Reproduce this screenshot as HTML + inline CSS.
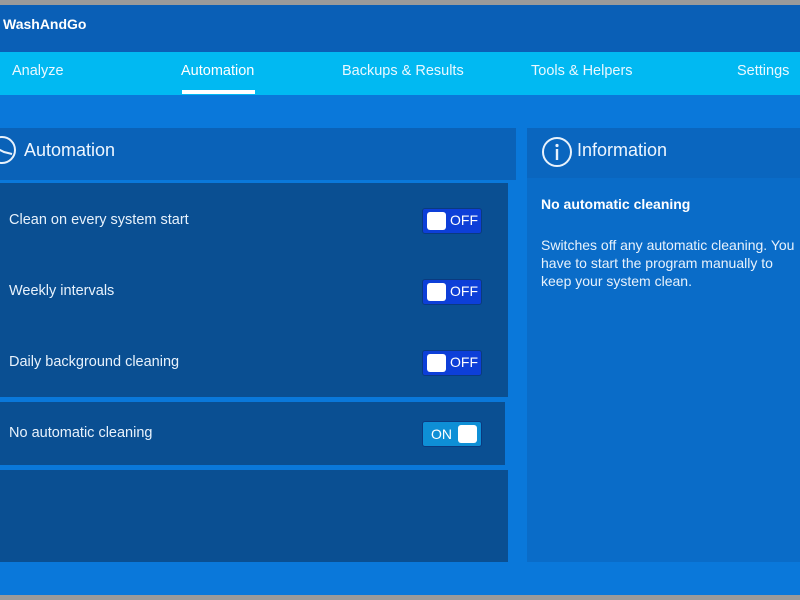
<!DOCTYPE html>
<html><head><style>
*{margin:0;padding:0;box-sizing:border-box}
body{width:800px;height:600px;overflow:hidden;background:#0a78da;font-family:"Liberation Sans","DejaVu Sans",sans-serif;color:#e8f2fc;position:relative}
.abs{position:absolute}
.tog{position:absolute;left:422px;width:60px;height:26px;border-radius:3px;border:1px solid #0a3a80;font-size:14px;color:#fff}
.off{background:#0d3fd8}
.off .k{position:absolute;left:4px;top:3px;width:19px;height:18px;background:#fff;border-radius:3px}
.off span{position:absolute;left:27px;top:3px}
.on{background:#0e8fd6}
.on .k{position:absolute;right:4px;top:3px;width:19px;height:18px;background:#fff;border-radius:3px}
.on span{position:absolute;left:8px;top:4px}
.lbl{position:absolute;left:9px;font-size:14.5px}
</style></head><body>
<div class="abs" style="left:0;top:0;width:800px;height:5px;background:#9a9a9a"></div>
<div class="abs" style="left:0;top:5px;width:800px;height:47px;background:#0a5fb6"></div>
<div class="abs" style="left:3px;top:16px;font-size:14px;font-weight:bold;color:#fff">WashAndGo</div>
<div class="abs" style="left:0;top:52px;width:800px;height:43px;background:#01b9f2"></div>
<div class="abs" style="top:63px;left:12px;font-size:14.5px;color:#eaf8ff">Analyze</div>
<div class="abs" style="top:63px;left:181px;font-size:14.5px;color:#fff">Automation</div>
<div class="abs" style="top:90px;left:182px;width:73px;height:4px;background:#fff"></div>
<div class="abs" style="top:63px;left:342px;font-size:14.5px;color:#eaf8ff">Backups &amp; Results</div>
<div class="abs" style="top:63px;left:531px;font-size:14.5px;color:#eaf8ff">Tools &amp; Helpers</div>
<div class="abs" style="top:63px;left:737px;font-size:14.5px;color:#eaf8ff">Settings</div>

<div class="abs" style="left:0;top:128px;width:516px;height:52px;background:#0a62b8"></div>
<svg class="abs" style="left:-12px;top:134px" width="30" height="32" viewBox="0 0 30 32"><circle cx="14" cy="16" r="13" fill="none" stroke="#e8f2fc" stroke-width="2"/><path d="M8 14 L16 18 L24 20" stroke="#e8f2fc" stroke-width="2" fill="none"/></svg>
<div class="abs" style="left:24px;top:140px;font-size:18px;color:#eef6ff">Automation</div>
<div class="abs" style="left:0;top:183px;width:508px;height:214px;background:#0a4f92"></div>
<div class="abs" style="left:0;top:402px;width:505px;height:63px;background:#0a4f92"></div>
<div class="abs" style="left:0;top:470px;width:508px;height:92px;background:#0a4f92"></div>
<div class="lbl" style="top:212px">Clean on every system start</div>
<div class="lbl" style="top:283px">Weekly intervals</div>
<div class="lbl" style="top:354px">Daily background cleaning</div>
<div class="lbl" style="top:425px">No automatic cleaning</div>
<div class="tog off" style="top:208px"><div class="k"></div><span>OFF</span></div>
<div class="tog off" style="top:279px"><div class="k"></div><span>OFF</span></div>
<div class="tog off" style="top:350px"><div class="k"></div><span>OFF</span></div>
<div class="tog on" style="top:421px"><span>ON</span><div class="k"></div></div>

<div class="abs" style="left:527px;top:128px;width:273px;height:434px;background:#0a6cc8"></div>
<div class="abs" style="left:527px;top:128px;width:273px;height:50px;background:#0a66bf"></div>
<svg class="abs" style="left:541px;top:136px" width="32" height="32" viewBox="0 0 32 32"><circle cx="16" cy="16" r="14" fill="none" stroke="#e8f2fc" stroke-width="2"/><circle cx="16" cy="9.5" r="1.6" fill="#e8f2fc"/><path d="M16 13 V24" stroke="#e8f2fc" stroke-width="2.4"/></svg>
<div class="abs" style="left:577px;top:140px;font-size:18px;color:#eef6ff">Information</div>
<div class="abs" style="left:541px;top:196px;font-size:14px;font-weight:bold;color:#fff">No automatic cleaning</div>
<div class="abs" style="left:541px;top:236px;font-size:14px;line-height:18px;width:270px;white-space:nowrap">Switches off any automatic cleaning. You<br>have to start the program manually to<br>keep your system clean.</div>
<div class="abs" style="left:0;top:595px;width:800px;height:5px;background:#9a9a9a"></div>
</body></html>
